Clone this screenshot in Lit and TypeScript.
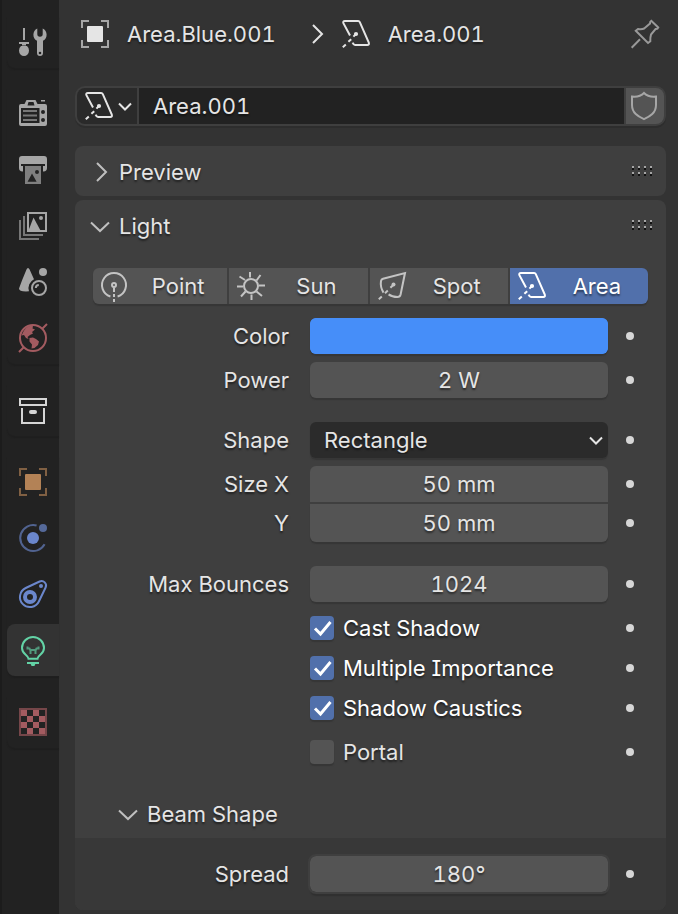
import { LitElement, html, svg, css, nothing } from "lit";
import { customElement, property, state } from "lit/decorators.js";
import { classMap } from "lit/directives/class-map.js";

const corners = svg`<path d="M1 8V1H8M20 1H27V8M27 20V27H20M8 27H1V20" class="dim"/>`;

const areaLight = svg`
  <path d="M8 15.5 1.4 3.2Q.6 1 3 1H16.2Q17.3 1 17.8 2.1L26.8 22.7Q27.5 25 25.2 25H13Q11.6 25 10.6 22.6"/>
  <path d="M.8 27.2 3.8 24.4M6.4 21.8 9.2 19.2M11.4 16.6 13.8 14.2"/>
  <circle cx="14" cy="14" r="2.1" class="fill"/>`;

const icons: Record<string, unknown> = {
  tool: svg`<g class="fill"><path d="M4 0H6V12H4ZM0 14H10V16H7V17.4H3V16H0ZM2 18H8Q10 19.600 10 22.500A5 5.500 0 0 1 0 22.500Q0 19.600 2 18Z"/>
    <path fill-rule="evenodd" d="M18.300.4V6A2.700 2.700 0 0 0 23.700 6V.4A7 7 0 0 1 24 12.800V25A3 3 0 0 1 18 25V12.800A7 7 0 0 1 18.300.4ZM21 23.700A1.300 1.300 0 1 0 21 26.300 1.300 1.300 0 0 0 21 23.700Z"/></g>`,
  render: svg`<g transform="translate(0 -1)"><path class="fill" fill-rule="evenodd" d="M22 1H26V2.600H22ZM2 5H5.500L7.500 1H16.500L18.500 5H26Q28 5 28 7V25Q28 27 26 27H2Q0 27 0 25V7Q0 5 2 5ZM8.500 6.500H15.500L14.500 3H9.500ZM2 9V24H20.500V9ZM24 11A2 2 0 1 0 24 15 2 2 0 0 0 24 11ZM24 19A2 2 0 1 0 24 23 2 2 0 0 0 24 19Z"/>
    <path class="dim" d="M4 12H18M4 16.500H18M4 21H18"/></g>`,
  output: svg`<path class="fill" d="M3 0H25Q28 0 28 3V12Q28 15.400 24.500 15.400H24V10H26V8H2V10H4V15.400H3.500Q0 15.400 0 12V3Q0 0 3 0Z"/>
    <path class="dimfill" fill-rule="evenodd" d="M6 10H22V28H6ZM8.600 25.700H17.600L13 17.600ZM18 14A2 2 0 1 0 18 18 2 2 0 0 0 18 14Z"/>`,
  viewlayer: svg`<path class="dim" d="M5 4V23H24M1 8V27H20"/><path d="M9 1H27V19H9Z"/>
    <path class="fill" d="M9.500 18.500 14.500 5.500 21.500 18.500Z"/><circle class="fill" cx="22" cy="6" r="2"/>`,
  scene: svg`<path class="fill" d="M9 0Q10 0 10.600 1.500L15 11.200A10 10 0 0 0 10 23.300Q0 24 0 20.500Q3 12 7.500 1.500Q8 0 9 0Z"/>
    <circle class="fill" cx="24" cy="4" r="4"/><circle cx="20" cy="20" r="7"/><path d="M16.800 20A3.200 3.200 0 0 1 19.800 17"/>`,
  world: svg`<circle cx="14" cy="14" r="13"/><path d="M0 28 5 23M23 5 28 0"/>
    <path class="fill" d="M7 4Q11 1 14 2.200L13.500 4.500 16 5.500 13 8 14 9.500 11 11 8.500 13 9.500 15 7 14 5 11 2.500 11.500Q4 7 7 4ZM10.500 14 14 13.500 17 15 20 17.500 19 21 15.500 24 12.500 24.500 13 20.500 10.500 17.500Z"/>`,
  collection: svg`<path d="M1 3H27V9H1ZM3 12V27H25V12"/><rect class="fill" x="10" y="14" width="8" height="4" rx="2"/>`,
  object: svg`${corners}<rect class="fill" x="6" y="6" width="16" height="16" rx="1"/>`,
  physics: svg`<path class="dim" d="M17.600 1.500A13 13 0 1 0 25.600 20.300"/><circle class="fill" cx="14" cy="14" r="6"/><circle class="dimfill" cx="24" cy="4" r="4"/>`,
  constraint: svg`<path d="M6.700 8 20.600 1.500A4.500 4.500 0 0 1 26.600 7.500L20 21.300A10 10 0 1 1 6.700 8Z"/>
    <path class="fill" fill-rule="evenodd" d="M11 10A7 7 0 1 0 11 24 7 7 0 0 0 11 10ZM11 14A3 3 0 1 1 11 20 3 3 0 0 1 11 14Z"/><circle class="fill" cx="22" cy="6" r="2"/>`,
  light: svg`<path d="M9.500 22.700C9 18.500 3 18.500 3 12A11 11 0 0 1 25 12C25 18.500 19 18.500 18.500 22.700ZM8 27H20"/>
    <path class="fill" d="M11.500 27.500H16.500L15.500 30H12.500Z"/><path class="dim" d="M8.500 10.500V12.500H10.500L11.500 14.500V18M19.500 10.500V12.500H17.500L16.500 14.500V18M11.500 14H16.500"/>`,
  texture: svg`<path class="dim" d="M1 1H27V27H1Z"/><path class="fill" d="M2 2h6v6h-6zM14 2h6v6h-6zM8 8h6v6h-6zM20 8h6v6h-6zM2 14h6v6h-6zM14 14h6v6h-6zM8 20h6v6h-6zM20 20h6v6h-6z"/>`,
  area: areaLight,
  point: svg`<path d="M9.400 24.500A12 12 0 1 1 16.600 24.500"/><circle cx="13" cy="13" r="2"/><path d="M13 15.500V20M13 22V25M13 27V30"/>`,
  sun: svg`<circle cx="14" cy="14" r="7"/><path d="M13 0V5.500M19.500 8.500 23.500 3M22 13.500H28M19.500 19.500 25 24M14.500 22.500V28M8.500 19.500 4 24.500M6 14.500H0M8 8 2.500 4.500"/>`,
  spot: svg`<path d="M5.500 20.600Q2 15 3 9Q3.300 7.200 5 6.700L27 1 22.600 22.500Q22 25 19.500 25Q14 25 10.600 22.400"/>
    <path d="M.8 27.200 3.800 24.400M7 21.200 9.800 18.600M12.400 15.800 15 13.200"/><circle class="fill" cx="15.500" cy="12.500" r="2"/>`,
  pin: svg`<path d="M.7 27.700 9 19.300M4.800 10.800 7 9Q11 9.600 13.200 8.500L19 3.500Q18.800 1.500 20.200 .8L27.300 7.400Q26.500 9.400 24.500 9L20 14.600Q19.200 17 19.300 21.200L17 23Z"/>`,
  shield: svg`<path d="M13 1C10 4 5.500 5 1 4.500V13C1 21 7 24.500 13 27.200C19 24.500 25 21 25 13V4.500C20.500 5 16 4 13 1Z"/>`,
  right: svg`<path d="M11 5 20 14 11 23"/>`,
  down: svg`<path d="M5 10.500 14 19 23 10.500"/>`,
  small: svg`<path d="M8 11.500 14 17.500 20 11.500"/>`,
  check: svg`<path d="M7 14.500 12.500 20 22.500 8"/>`,
};

@customElement("ui-icon")
class UiIcon extends LitElement {
  @property() name = "";
  static styles = css`
    :host { display: inline-flex; flex: none; width: 28px; height: 28px; }
    svg { width: 28px; height: 28px; overflow: visible; fill: none; stroke: currentColor; stroke-width: var(--stroke, 2); }
    .fill { fill: currentColor; stroke: none; }
    .dim { opacity: 0.65; }
    .dimfill { fill: currentColor; stroke: none; opacity: 0.7; }
  `;
  render() {
    return html`<svg viewBox="0 0 28 28" aria-hidden="true">${icons[this.name]}</svg>`;
  }
}

const tabGroups = [
  [["tool", "Tool", "grey"]],
  [["render", "Render", "grey"], ["output", "Output", "grey"], ["viewlayer", "View Layer", "grey"], ["scene", "Scene", "grey"], ["world", "World", "red"]],
  [["collection", "Collection", "white"]],
  [["object", "Object", "orange"], ["physics", "Physics", "blue"], ["constraint", "Constraints", "blue"], ["light", "Data", "green"]],
  [["texture", "Texture", "red"]],
];

@customElement("app-root")
class AppRoot extends LitElement {
  @state() private tab = "light";
  @state() private kind = "area";

  static styles = css`
    * { box-sizing: border-box; }
    :host {
      display: flex;
      min-height: 100vh;
      background: #333333;
      color: #e5e5e5;
      font: 22px/28px Inter, "Liberation Sans", sans-serif;
      font-feature-settings: "cv08", "tnum";
      text-shadow: 0 2px 2px rgba(0, 0, 0, 0.5);
    }
    button, input, select { font: inherit; font-feature-settings: inherit; color: inherit; text-shadow: inherit; border: 0; margin: 0; padding: 0; background: none; border-radius: 0; }
    nav { display: flex; flex-direction: column; gap: 20px; flex: none; width: 59px; padding: 16px 0 16px 5px; background: #222222; border-left: 2px solid #1c1c1c; }
    .group { display: flex; flex-direction: column; gap: 4px; border-bottom-left-radius: 8px; box-shadow: 0 2px 1px #1f1f1f; }
    .tab { display: flex; align-items: center; height: 52px; padding-left: 12px; border-radius: 8px 0 0 8px; }
    .tab.on { background: #333333; }
    .grey { color: #a6a6a6; }
    .white { color: #d6d6d6; }
    .red { color: #a35b60; }
    .orange { color: #b38256; }
    .blue { color: #6b87cc; }
    .green { color: #63d3a6; }
    main { flex: 1; min-width: 0; padding: 14px 12px 4px 16px; }
    .path { display: flex; align-items: center; height: 40px; padding: 0 7px 0 6px; }
    .path span { margin-left: 18px; }
    .path .sep { margin-left: 26px; }
    .path .kind { margin-left: 12px; }
    .path .pin { margin-left: auto; display: flex; color: #999999; }
    .idrow { display: flex; gap: 2px; height: 40px; margin: 32px 0 20px; border: 2px solid #3f3f3f; background: #3f3f3f; border-radius: 10px; box-shadow: 0 2px 0 #2d2d2d; overflow: hidden; }
    .browse { display: flex; align-items: center; width: 60px; padding-left: 8px; background: #2a2a2a; }
    .browse .arrow { margin-left: -2px; }
    .idrow input { flex: 1; min-width: 0; padding-left: 14px; background: #222222; }
    .shield { display: flex; align-items: center; justify-content: center; width: 38px; background: #545454; color: #a6a6a6; }
    .panel { border-radius: 8px; background: #3f3f3f; margin-bottom: 4px; overflow: hidden; }
    .panel.last { margin-bottom: 0; }
    .head { display: flex; align-items: center; height: 50px; padding: 0 14px 0 11px; }
    .head button { display: flex; align-items: center; gap: 5px; flex: 1; padding-top: 2px; text-align: left; }
    .head ui-icon, .subhead ui-icon { color: #bfbfbf; }
    .grip { display: grid; grid-template-columns: repeat(4, 2px); gap: 2px 4px; }
    .grip i { height: 4px; background: linear-gradient(#a6a6a6 50%, #111111 50%); }
    .kinds { display: grid; grid-template-columns: 34fr 35fr 35fr 35fr; gap: 2px; height: 36px; margin: 18px 18px 14px; border-radius: 6px; box-shadow: 0 2px 1px #363636; }
    .kinds button { display: flex; align-items: center; padding-left: 8px; background: #545454; }
    .kinds button:first-child { border-radius: 6px 0 0 6px; }
    .kinds button:last-child { border-radius: 0 6px 6px 0; }
    .kinds span { flex: 1; text-align: center; }
    .kinds ui-icon { color: #c4c4c4; }
    .kinds .on { background: #5170ab; color: #ffffff; }
    .kinds .on ui-icon { color: #ffffff; }
    .rows { display: flex; flex-direction: column; gap: 8px; padding: 0 18px; }
    .block { display: flex; flex-direction: column; gap: 8px; margin-bottom: 16px; }
    .block.tight { gap: 4px; margin-bottom: 0; }
    .pair { display: flex; flex-direction: column; gap: 2px; }
    .row { display: grid; grid-template-columns: 217px minmax(0, 1fr) 40px; align-items: center; min-height: 36px; }
    .row > .name { text-align: right; padding-right: 21px; }
    .field { width: 100%; height: 36px; border-radius: 6px; background: #545454; text-align: center; box-shadow: 0 2px 1px #363636; }
    .pair .row:first-child .field { border-radius: 6px 6px 0 0; box-shadow: none; }
    .pair .row:last-child .field { border-radius: 0 0 6px 6px; height: 38px; }
    .swatch { appearance: none; background: #468ef9; }
    .swatch::-webkit-color-swatch-wrapper { padding: 0; }
    .swatch::-webkit-color-swatch { border: 0; border-radius: 6px; }
    .menu { display: grid; grid-template-columns: minmax(0, 1fr) 28px; align-items: center; }
    .menu select { grid-area: 1 / 1 / 2 / 3; appearance: none; background: #2b2b2b; text-align: left; padding: 0 30px 0 14px; }
    .menu ui-icon { grid-area: 1 / 2; pointer-events: none; margin-left: 2px; }
    .dot { justify-self: end; display: flex; align-items: center; justify-content: center; width: 36px; height: 28px; }
    .dot::before { content: ""; width: 8px; height: 8px; border-radius: 50%; background: #d6d6d6; }
    .tick { grid-column: 2; display: grid; grid-template-columns: 24px 1fr; column-gap: 9px; align-items: center; }
    .tick input { grid-area: 1 / 1; appearance: none; width: 24px; height: 24px; border-radius: 4px; background: #545454; box-shadow: 0 2px 1px #363636; }
    .tick input:checked { background: #5170ab; }
    .tick input:checked ~ span { color: #ffffff; }
    .tick ui-icon { grid-area: 1 / 1; justify-self: center; display: none; color: #ffffff; pointer-events: none; --stroke: 3; }
    .tick input:checked ~ ui-icon { display: inline-flex; }
    .portal { margin-bottom: 20px; }
    .subhead { display: flex; align-items: center; gap: 5px; width: 100%; height: 48px; padding-left: 39px; text-align: left; }
    .sub { background: #383838; padding: 18px; }
    .sub .field { outline: 2px solid #3f3f3f; box-shadow: 0 4px 1px #303030; }
  `;

  private dot(name: string) {
    return html`<button class="dot" aria-label="Animate ${name}"></button>`;
  }

  private number(id: string, label: string, value: string) {
    return html`<div class="row"><label class="name" for=${id}>${label}</label><input class="field" id=${id} .value=${value}>${this.dot(label)}</div>`;
  }

  private tick(label: string, on: boolean, extra = "") {
    return html`<div class="row ${extra}">
      <label class="tick"><input type="checkbox" .checked=${on}><ui-icon name="check"></ui-icon><span>${label}</span></label>
      ${this.dot(label)}
    </div>`;
  }

  private head(label: string, open: boolean) {
    return html`<div class="head">
      <button aria-expanded=${open}><ui-icon name=${open ? "down" : "right"}></ui-icon>${label}</button>
      <div class="grip">${Array.from({ length: 8 }, () => html`<i></i>`)}</div>
    </div>`;
  }

  render() {
    return html`
      <nav aria-label="Properties">
        ${tabGroups.map((group) => html`<div class="group">
          ${group.map(([id, label, tone]) => html`<button
            class=${classMap({ tab: true, [tone]: true, on: this.tab === id })}
            aria-label=${label} aria-current=${this.tab === id ? "page" : nothing}
            @click=${() => (this.tab = id)}><ui-icon name=${id}></ui-icon></button>`)}
        </div>`)}
      </nav>
      <main>
        <div class="path">
          <ui-icon name="object"></ui-icon><span>Area.Blue.001</span>
          <ui-icon class="sep" name="right"></ui-icon>
          <ui-icon class="kind" name="area"></ui-icon><span>Area.001</span>
          <button class="pin" aria-label="Pin"><ui-icon name="pin"></ui-icon></button>
        </div>
        <div class="idrow">
          <button class="browse" aria-label="Browse light data"><ui-icon name="area"></ui-icon><ui-icon class="arrow" name="small"></ui-icon></button>
          <input aria-label="Name" .value=${"Area.001"}>
          <button class="shield" aria-label="Fake user"><ui-icon name="shield"></ui-icon></button>
        </div>
        <section class="panel">${this.head("Preview", false)}</section>
        <section class="panel last">
          ${this.head("Light", true)}
          <div class="kinds">
            ${["Point", "Sun", "Spot", "Area"].map((label) => {
              const id = label.toLowerCase();
              return html`<button class=${classMap({ on: this.kind === id })} aria-pressed=${this.kind === id}
                @click=${() => (this.kind = id)}><ui-icon name=${id}></ui-icon><span>${label}</span></button>`;
            })}
          </div>
          <div class="rows">
            <div class="block">
              <div class="row"><label class="name" for="color">Color</label><input class="field swatch" type="color" id="color" .value=${"#468ef9"}>${this.dot("Color")}</div>
              ${this.number("power", "Power", "2 W")}
            </div>
            <div class="block">
              <div class="row"><label class="name" for="shape">Shape</label>
                <div class="menu"><select class="field" id="shape"><option>Rectangle</option><option>Square</option><option>Disk</option><option>Ellipse</option></select><ui-icon name="small"></ui-icon></div>
                ${this.dot("Shape")}</div>
              <div class="pair">
                ${this.number("size-x", "Size X", "50 mm")}
                ${this.number("size-y", "Y", "50 mm")}
              </div>
            </div>
            ${this.number("bounces", "Max Bounces", "1024")}
            <div class="block tight">
              ${this.tick("Cast Shadow", true)}
              ${this.tick("Multiple Importance", true)}
              ${this.tick("Shadow Caustics", true)}
            </div>
            ${this.tick("Portal", false, "portal")}
          </div>
          <button class="subhead" aria-expanded="true"><ui-icon name="down"></ui-icon>Beam Shape</button>
          <div class="sub">${this.number("spread", "Spread", "180°")}</div>
        </section>
      </main>
    `;
  }
}
